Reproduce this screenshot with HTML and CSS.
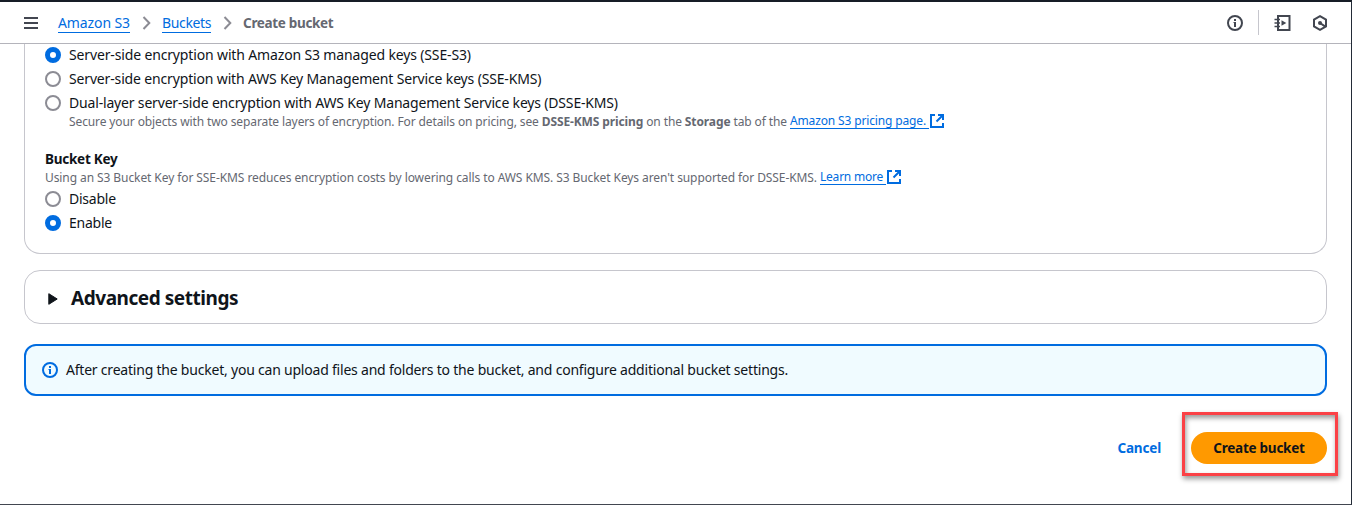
FILE: index.html
```html
<!DOCTYPE html>
<html lang="en">
<head>
<meta charset="utf-8">
<title>Create bucket</title>
<link rel="stylesheet" href="styles.css">
</head>
<body>
<div class="app">
  <header class="topbar">
    <svg class="menu" width="14" height="12" viewBox="0 0 14 12"><path d="M0 1h14M0 6h14M0 11h14" stroke="#424650" stroke-width="2"/></svg>
    <nav class="crumbs">
      <a class="crumb crumb-service" href="#">Amazon S3</a>
      <svg class="chev" width="10" height="14" viewBox="0 0 10 14"><path d="M1.500 1l5.800 6-5.800 6" fill="none" stroke="#8c8c94" stroke-width="2"/></svg>
      <a class="crumb crumb-list" href="#">Buckets</a>
      <svg class="chev" width="10" height="14" viewBox="0 0 10 14"><path d="M1.500 1l5.800 6-5.800 6" fill="none" stroke="#8c8c94" stroke-width="2"/></svg>
      <span class="current">Create bucket</span>
    </nav>
    <div class="tools">
      <svg width="16" height="16" viewBox="0 0 16 16" fill="none" stroke="#424650" stroke-width="2"><circle cx="8" cy="8" r="7"/><path d="M8 4v2M8 7v5"/><path d="M6.500 7.500H8" stroke-width="1"/></svg>
      <span class="divider"></span>
      <svg class="book" width="17" height="16" viewBox="0 0 17 16" fill="none" stroke="#424650" stroke-width="2"><path d="M4 5V1h11.500v14H4v-4M4 5v6"/><path d="M.5 4.500h5.500M.5 8h5.500M.5 11.500h5.500" stroke-width="1.500"/><path d="M7.500 5.300v5.400L12.300 8z" fill="#424650" stroke="none"/></svg>
      <svg class="hex" width="16" height="16" viewBox="0 0 16 16" fill="none" stroke="#424650" stroke-width="2"><path d="M8 1.200l6 3.400v6.800l-6 3.400-6-3.400V4.600z"/><circle cx="8" cy="8" r="2" fill="#424650" stroke="none"/><path d="M8 8l5 3.400"/></svg>
    </div>
  </header>
  <main class="content">
    <section class="card encryption">
      <div class="types">
        <label class="option"><span class="radio on"></span><span class="sse-s3">Server-side encryption with Amazon S3 managed keys (SSE-S3)</span></label>
        <label class="option"><span class="radio"></span><span class="sse-kms">Server-side encryption with AWS Key Management Service keys (SSE-KMS)</span></label>
        <label class="option"><span class="radio"></span><span class="dsse-kms">Dual-layer server-side encryption with AWS Key Management Service keys (DSSE-KMS)</span></label>
      </div>
      <p class="hint indent"><span class="pricing-text">Secure your objects with two separate layers of encryption. For details on pricing, see <b>DSSE-KMS pricing</b> on the <b>Storage</b> tab of the </span><a class="pricing-link" href="#">Amazon S3 pricing page. </a><svg class="ext" width="14" height="14" viewBox="0 0 14 14" fill="none" stroke="#006ce0" stroke-width="2"><path d="M5 1H1v12h12V9"/><path d="M8 1h5v5M13 1L6.500 7.500"/></svg></p>
      <h3 class="subhead">Bucket Key</h3>
      <p class="hint"><span class="key-text">Using an S3 Bucket Key for SSE-KMS reduces encryption costs by lowering calls to AWS KMS. S3 Bucket Keys aren't supported for DSSE-KMS. </span><a class="key-link" href="#">Learn more </a><svg class="ext" width="14" height="14" viewBox="0 0 14 14" fill="none" stroke="#006ce0" stroke-width="2"><path d="M5 1H1v12h12V9"/><path d="M8 1h5v5M13 1L6.500 7.500"/></svg></p>
      <label class="option key"><span class="radio"></span><span class="short">Disable</span></label>
      <label class="option"><span class="radio on"></span><span class="short">Enable</span></label>
    </section>
    <section class="card advanced">
      <svg width="10" height="12" viewBox="0 0 10 12"><path d="M.8.700v10.600L9.200 6z" fill="#0f141a" stroke="#0f141a" stroke-linejoin="round"/></svg>
      <h2>Advanced settings</h2>
    </section>
    <section class="alert">
      <svg width="16" height="16" viewBox="0 0 16 16" fill="none" stroke="#006ce0" stroke-width="2"><circle cx="8" cy="8" r="7"/><path d="M8 4v2M8 7v5"/><path d="M6.500 7.500H8" stroke-width="1"/></svg>
      <span class="alert-text">After creating the bucket, you can upload files and folders to the bucket, and configure additional bucket settings.</span>
    </section>
    <footer class="actions">
      <a class="cancel" href="#">Cancel</a>
      <div class="highlight"><button class="primary">Create bucket</button></div>
    </footer>
  </main>
</div>
</body>
</html>
```
FILE: styles.css
```css
* { box-sizing: border-box; }
body { margin: 0; font-family: "Noto Sans", "Open Sans", sans-serif; font-size: 14px; color: #0f141a; }
a { color: #006ce0; }
h2, h3, p { margin: 0; }
.app { height: 505px; overflow: hidden; display: flex; flex-direction: column; background: #fff; border-top: 2px solid #161d26; border-right: 1px solid #232b37; border-bottom: 1px solid #424650; }
.topbar { flex: none; height: 42px; border-bottom: 1px solid #b4b4bb; display: flex; align-items: center; padding: 0 23px 0 24px; }
.menu { flex: none; margin-right: 20px; }
.crumbs { display: flex; align-items: center; line-height: 20px; }
.crumb { text-decoration: none; border-bottom: 1px solid #006ce0; line-height: 18px; margin-top: 1px; }
.crumb-service { letter-spacing: -.1px; }
.crumb-list { letter-spacing: -.37px; }
.chev { margin: 0 10px 0 12px; }
.current { font-weight: 700; font-size: 13.5px; letter-spacing: -.33px; color: #656871; }
.tools { margin-left: auto; display: flex; align-items: center; }
.divider { width: 1px; height: 25px; background: #c6c6cd; margin: 0 15px; }
.hex { margin-left: 21px; }
.content { padding: 0 24px; display: flex; flex-direction: column; }
.card { border: 1px solid #c6c6cd; border-radius: 16px; }
.encryption { height: 210px; border-top: 0; border-radius: 0 0 16px 16px; padding: 0 20px; }
.types { margin-top: -1px; }
.option { display: flex; align-items: center; gap: 8px; height: 24px; line-height: 22px; white-space: nowrap; }
.sse-s3 { letter-spacing: -.145px; }
.sse-kms { letter-spacing: -.155px; }
.dsse-kms { letter-spacing: -.175px; }
.short { letter-spacing: -.23px; }
.radio { flex: none; width: 16px; height: 16px; border: 2px solid #8c8c94; border-radius: 50%; background: #fff; }
.radio.on { border: 5px solid #006ce0; }
.hint { display: flex; align-items: center; height: 16px; line-height: 16px; font-size: 12px; color: #656871; white-space: pre; }
.hint span { padding-top: 1px; }
.hint a { text-decoration: none; border-bottom: 1px solid #006ce0; line-height: 14px; margin-top: 1px; }
.indent { padding-left: 24px; margin-top: -2px; }
.pricing-text { letter-spacing: -.113px; }
.pricing-link { letter-spacing: -.14px; }
.key-text { letter-spacing: -.085px; }
.key-link { letter-spacing: -.22px; }
.ext { margin-left: 1px; }
.subhead { font-size: 13.5px; letter-spacing: -.25px; line-height: 20px; margin-top: 20px; }
.key { margin-top: 2px; }
.advanced { margin-top: 16px; height: 54px; display: flex; align-items: center; padding: 3px 0 0 23px; gap: 13px; }
.advanced h2 { font-size: 19px; letter-spacing: -.45px; line-height: 24px; padding-bottom: 2px; }
.alert { margin-top: 20px; height: 52px; border: 2px solid #006ce0; border-radius: 12px; background: #f0fbff; display: flex; align-items: center; gap: 8px; padding-left: 16px; }
.alert-text { letter-spacing: -.213px; padding-bottom: 2px; }
.actions { display: flex; justify-content: flex-end; align-items: center; margin: 16px -11px 0 0; gap: 21px; }
.cancel { font-weight: 700; font-size: 13.5px; letter-spacing: -.17px; text-decoration: none; padding-top: 8px; }
.highlight { width: 156px; height: 64px; border: 3px solid #fb4146; padding: 17px 8px 0 6px; box-shadow: 1px 3px 5px rgba(0,0,0,.4), inset 1px 3px 5px rgba(0,0,0,.4); }
.primary { display: block; width: 136px; height: 32px; border: 0; border-radius: 16px; background: #ff9900; color: #0f141a; font: 700 13.5px "Noto Sans", sans-serif; letter-spacing: -.25px; padding: 0; }
```
